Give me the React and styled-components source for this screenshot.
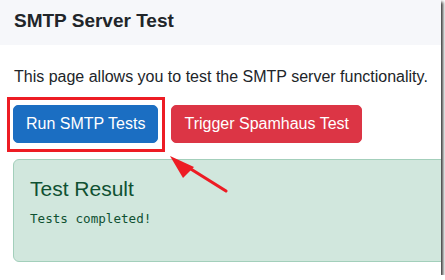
import React from 'react'
import styled, { createGlobalStyle } from 'styled-components'

const GlobalStyle = createGlobalStyle`
    html, body {
        margin: 0;
        padding: 0;
        background: #ffffff;
    }
    body {
        font-family: 'Liberation Sans', Arial, sans-serif;
        color: #212529;
    }
`

const Frame = styled.div`
    position: relative;
    width: 441px;
    height: 275px;
    overflow: hidden;
    background: #ffffff;
    box-shadow: 2px 2px 3px rgba(0, 0, 0, .8);
`

const Header = styled.header`
    background-color: #f6f7fa;
    height: 45px;
    box-sizing: border-box;
    padding: 8px 14px 13px;
`

const Title = styled.h1`
    margin: 0;
    font-size: 19px;
    line-height: 25px;
    font-weight: 700;
    color: #212529;
`

const Content = styled.main`
    padding: 20px 0 0 13px;
    width: 460px;
`

const Intro = styled.p`
    margin: 0 0 16px 1px;
    font-size: 16px;
    line-height: 24px;
`

const ButtonRow = styled.div`
    display: flex;
    gap: 13px;
    margin-bottom: 16px;
`

const Highlighted = styled.div`
    position: relative;
    display: flex;
`

const HighlightBox = styled.span`
    position: absolute;
    top: -8px;
    left: -6px;
    right: -7px;
    bottom: -9px;
    border: 3.5px solid #ed1c24;
    pointer-events: none;
`

const Button = styled.button`
    font-family: 'Liberation Sans', Arial, sans-serif;
    font-size: 16px;
    line-height: 24px;
    padding: 6px 12px;
    border: 1px solid ${p => p.$color};
    border-radius: 5px;
    background-color: ${p => p.$color};
    color: #ffffff;
    cursor: pointer;
`

const Alert = styled.section`
    background-color: #d1e7dd;
    border: 1px solid #a3cfbb;
    border-radius: 6px;
    padding: 16px;
    color: #0f5132;
`

const AlertHeading = styled.h4`
    margin: 0 0 8px;
    font-size: 21px;
    line-height: 25px;
    font-weight: 400;
`

const Output = styled.pre`
    margin: 0 0 16px;
    font-family: 'DejaVu Sans Mono', 'Liberation Mono', monospace;
    font-size: 12.6px;
    line-height: 19.5px;
    color: #0f5132;
`

const Arrow = styled.svg`
    position: absolute;
    left: 160px;
    top: 146px;
    width: 80px;
    height: 57px;
    pointer-events: none;
`

const App = () => (
    <>
        <GlobalStyle />
        <Frame>
            <Header>
                <Title>SMTP Server Test</Title>
            </Header>
            <Content>
                <Intro>This page allows you to test the SMTP server functionality.</Intro>
                <ButtonRow>
                    <Highlighted>
                        <Button $color="#1b6ec2">Run SMTP Tests</Button>
                        <HighlightBox />
                    </Highlighted>
                    <Button $color="#dc3545">Trigger Spamhaus Test</Button>
                </ButtonRow>
                <Alert>
                    <AlertHeading>Test Result</AlertHeading>
                    <Output>Tests completed!</Output>
                </Alert>
            </Content>
            <Arrow viewBox="0 0 80 57">
                <line x1="66" y1="45" x2="26" y2="20" stroke="#ed1c24" strokeWidth="3.2" strokeLinecap="round" />
                <polygon points="10,10 34,21 23,32" fill="#ed1c24" />
            </Arrow>
        </Frame>
    </>
)

export default App
